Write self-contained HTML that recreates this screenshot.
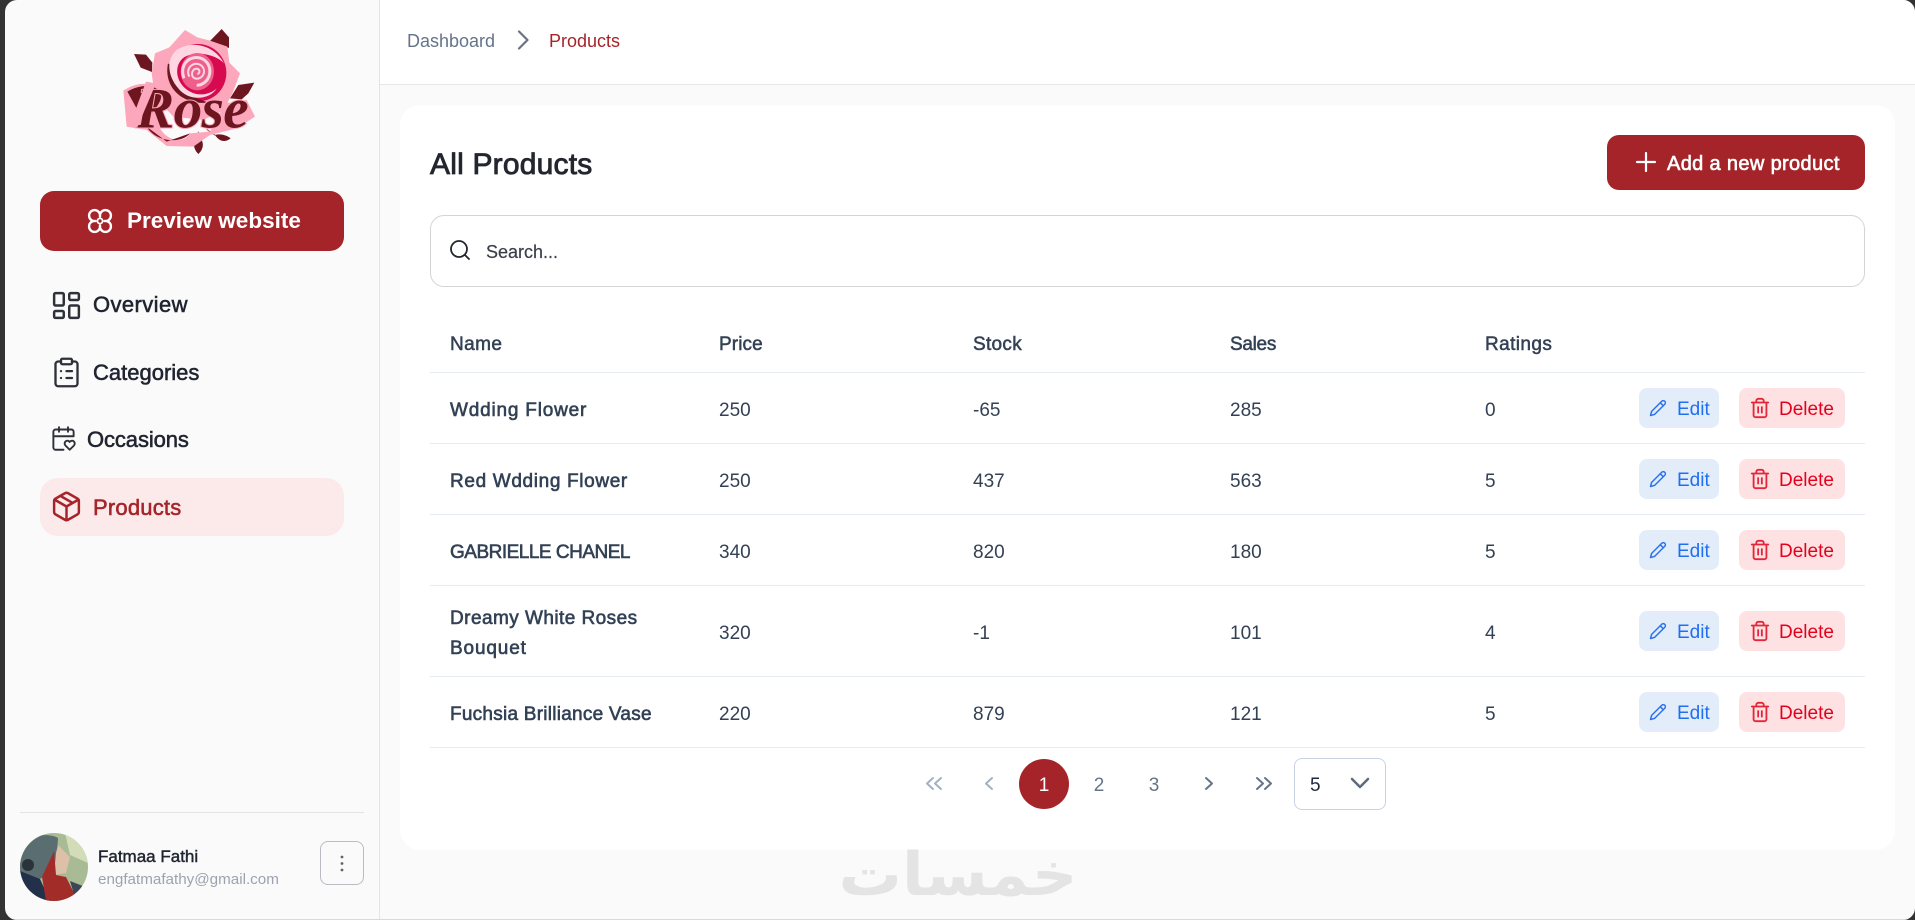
<!DOCTYPE html>
<html><head><meta charset="utf-8"><title>All Products</title>
<style>
html,body{margin:0;padding:0;width:1915px;height:920px;overflow:hidden;background:#333;font-family:"Liberation Sans",Arial,sans-serif}
#page{position:absolute;left:5px;top:0;width:1910px;height:920px;background:#fafafa;border-radius:12px;overflow:hidden}
#root{position:absolute;left:-5px;top:0;width:1915px;height:920px}
.a{position:absolute}
.t{position:absolute;white-space:nowrap;line-height:0}
.sb{position:absolute;left:379px;top:0;width:1px;height:920px;background:#e4e4e7}
.nav{font-size:22px;color:#1f2430;-webkit-text-stroke:.55px #1f2430}
.h{font-size:19px;color:#334155;-webkit-text-stroke:.5px #334155;letter-spacing:.1px}
.n{font-size:19px;color:#334155;-webkit-text-stroke:.6px #334155;left:450px}
.v{font-size:19px;color:#334155}
.line{position:absolute;left:430px;width:1435px;height:1.500px;background:#e7ecf3}
.e{position:absolute;left:1639px;width:80px;height:40px;border-radius:8px;background:#e3edf9}
.d{position:absolute;left:1739px;width:106px;height:40px;border-radius:8px;background:#fee2e3}
.e span,.d span{position:absolute;top:22px;line-height:0;font-size:19px;white-space:nowrap}
.e span{left:38px;color:#1f6ff2}.d span{left:40px;color:#e5001c}
.e svg,.d svg{position:absolute;fill:none;stroke-width:2;stroke-linecap:round;stroke-linejoin:round}
.e svg{left:10px;top:11px;stroke:#2b72ee}.d svg{left:10px;top:9px;stroke:#e5263a}
.pg{font-size:19px;color:#64748b;transform:translateX(-50%)}
svg.i{position:absolute;fill:none;stroke-linecap:round;stroke-linejoin:round}
</style></head><body>
<div id="page"><div id="root">
<!-- header -->
<div class="a" style="left:380px;top:0;width:1535px;height:84px;background:#fff;border-bottom:1px solid #e5e7eb"></div>
<div class="sb"></div>
<div class="t" style="left:407px;top:41px;font-size:18px;color:#64748b">Dashboard</div>
<svg class="i" style="left:514px;top:30px" width="18" height="20" viewBox="0 0 18 20"><path d="M5 1.500 13.500 10 5 18.500" stroke="#6b7280" stroke-width="2.200"/></svg>
<div class="t" style="left:549px;top:41px;font-size:18px;color:#a52429">Products</div>

<!-- logo -->
<svg class="a" style="left:110px;top:20px" width="160" height="140" viewBox="0 0 480 420">
<path d="M298 65 335 27 357 52 357 84Z" fill="#6e1620"/>
<path d="M72 102 108 104 127 128 126 156 92 143Z" fill="#6e1620"/>
<path d="M360 235 385 195 433 188 415 220 395 238Z" fill="#6e1620"/>
<path d="M265 345C248 365 248 385 265 402 283 385 283 365 265 345Z" fill="#6e1620"/>
<path d="M315 345C330 340 350 345 362 355 345 368 328 365 315 345Z" fill="#6e1620"/>
<path d="M265 335V350M290 328 316 346" stroke="#8d6a6d" stroke-width="3"/>
<path d="M225 30 262 52 300 62 352 80 358 128 390 160 368 218 342 270 280 300 190 290 135 230 125 160 135 100 178 82Z" fill="#fca7bb"/>
<ellipse cx="265" cy="158" rx="84" ry="86" fill="#d80a4f" transform="rotate(-10 265 158)"/>
<path d="M174 130C160 200 215 255 295 248 250 232 205 215 200 150Z" fill="#6e1620"/>
<path d="M200 90C240 62 310 70 342 130 320 105 260 90 222 112 190 135 195 190 240 215 270 232 305 220 320 205 300 240 235 245 205 205 170 165 170 115 200 90Z" fill="#ffd6e2"/>
<ellipse cx="262" cy="155" rx="50" ry="56" fill="#ef5f8c"/>
<path d="M222 175C205 130 245 100 280 118 315 140 300 195 260 196" fill="none" stroke="#ffd6e2" stroke-width="9"/>
<path d="M238 170C225 145 250 122 272 135 292 150 280 178 258 176 240 172 244 148 258 146 270 146 272 160 262 162" fill="none" stroke="#ffd6e2" stroke-width="6"/>
<path d="M40 212C85 180 150 185 170 225 180 270 140 290 150 325 175 368 225 368 240 340L300 335 345 250 410 240 435 290 380 325 300 345 250 380 170 378 110 330 50 320Z" fill="#fca7bb"/>
<path d="M52 215C85 195 130 190 150 215 165 240 130 270 105 310 130 370 215 372 240 340L250 300 240 340 170 365 110 320Z" fill="#6e1620"/>
<text x="78" y="322" font-family="Liberation Serif,serif" font-style="italic" font-weight="700" font-size="172" fill="#6e1620" stroke="#fca7bb" stroke-width="6" paint-order="stroke" letter-spacing="-2">Rose</text>
<path d="M108 185 138 190 82 322 58 320Z" fill="#fca7bb"/>
</svg>

<!-- preview -->
<div class="a" style="left:40px;top:191px;width:304px;height:60px;background:#a52429;border-radius:14px"></div>
<svg class="i" style="left:87px;top:208px" width="26" height="26" viewBox="0 0 26 26"><path d="M13 8.500A5.500 5.500 0 1 1 17.500 13 5.500 5.500 0 1 1 13 17.500 5.500 5.500 0 1 1 8.500 13 5.500 5.500 0 1 1 13 8.500Z" stroke="#fff" stroke-width="2.400"/><circle cx="13" cy="13" r="2.600" stroke="#fff" stroke-width="1.800"/></svg>
<div class="t" style="left:127px;top:221px;font-size:22.500px;font-weight:700;color:#fff">Preview website</div>

<!-- nav -->
<svg class="i" style="left:50px;top:288.500px" width="33" height="33" viewBox="0 0 24 24" stroke="#2e313a" stroke-width="1.800"><rect x="3" y="3" width="7" height="9" rx="1"/><rect x="14" y="3" width="7" height="5" rx="1"/><rect x="14" y="12" width="7" height="9" rx="1"/><rect x="3" y="16" width="7" height="5" rx="1"/></svg>
<div class="t nav" style="left:93px;top:305px;letter-spacing:.4px">Overview</div>
<svg class="i" style="left:50px;top:355.500px" width="33" height="33" viewBox="0 0 24 24" stroke="#2e313a" stroke-width="1.700"><rect x="8" y="2" width="8" height="4" rx="1"/><path d="M16 4h2a2 2 0 0 1 2 2v14a2 2 0 0 1-2 2H6a2 2 0 0 1-2-2V6a2 2 0 0 1 2-2h2"/><path d="M12 11h4M12 16h4M8 11h.01M8 16h.01"/></svg>
<div class="t nav" style="left:93px;top:373px">Categories</div>
<svg class="i" style="left:50px;top:425px" width="27" height="27" viewBox="0 0 24 24" stroke="#2e313a" stroke-width="1.700"><path d="M3 10h18V6a2 2 0 0 0-2-2H5a2 2 0 0 0-2 2v14c0 1.100.9 2 2 2h7"/><path d="M8 2v4M16 2v4"/><path d="M21.290 14.700a2.430 2.430 0 0 0-2.650-.52c-.3.120-.57.300-.8.530l-.34.340-.35-.34a2.430 2.430 0 0 0-2.650-.53c-.3.120-.56.300-.79.530-.95.940-1 2.530.2 3.740L17.500 22l3.600-3.550c1.200-1.210 1.140-2.800.19-3.740Z"/></svg>
<div class="t nav" style="left:87px;top:440px;letter-spacing:-.1px">Occasions</div>
<div class="a" style="left:40px;top:478px;width:304px;height:58px;background:#fceaea;border-radius:18px"></div>
<svg class="i" style="left:50px;top:490px" width="33" height="33" viewBox="0 0 24 24" stroke="#a52429" stroke-width="1.800"><path d="M11 21.730a2 2 0 0 0 2 0l7-4A2 2 0 0 0 21 16V8a2 2 0 0 0-1-1.730l-7-4a2 2 0 0 0-2 0l-7 4A2 2 0 0 0 3 8v8a2 2 0 0 0 1 1.730z"/><path d="M12 22V12M3.300 7 12 12l8.700-5M7.500 4.270l9 5.150"/></svg>
<div class="t nav" style="left:93px;top:508px;color:#a52429;-webkit-text-stroke:.55px #a52429;letter-spacing:.2px">Products</div>

<!-- user -->
<div class="a" style="left:20px;top:812px;width:344px;height:1px;background:#e4e4e7"></div>
<svg class="a" style="left:20px;top:833px" width="68" height="68" viewBox="0 0 68 68"><defs><clipPath id="c"><circle cx="34" cy="34" r="34"/></clipPath></defs><g clip-path="url(#c)"><rect width="68" height="68" fill="#a9bb95"/><path d="M45 0H68V30L50 22Z" fill="#d3dcb8"/><path d="M0 18C8 0 30 0 38 5L36 35 20 46 0 40Z" fill="#5a6d70"/><path d="M0 38 20 46 30 68H0Z" fill="#23304a"/><path d="M38 12 50 24 46 40 34 42 36 20Z" fill="#dcc0a8"/><path d="M34 18 36 42 46 44 58 68H26L22 44Z" fill="#a22c28"/><path d="M50 48 68 55V68H56Z" fill="#3d4656"/><circle cx="8" cy="32" r="6" fill="#2a3338"/></g></svg>
<div class="t" style="left:98px;top:857px;font-size:17px;color:#1f2430;-webkit-text-stroke:.45px #1f2430">Fatmaa Fathi</div>
<div class="t" style="left:98px;top:880px;font-size:15.200px;color:#9ca3af">engfatmafathy@gmail.com</div>
<div class="a" style="left:320px;top:841px;width:42px;height:42px;border:1px solid #b9bcc2;border-radius:8px"></div>
<svg class="i" style="left:338px;top:852px" width="8" height="22" viewBox="0 0 8 22"><circle cx="4" cy="5" r="1.400" fill="#5b6470"/><circle cx="4" cy="11.500" r="1.400" fill="#5b6470"/><circle cx="4" cy="18" r="1.400" fill="#5b6470"/></svg>

<!-- card -->
<div class="a" style="left:400px;top:105px;width:1495px;height:745px;background:#fff;border-radius:20px"></div>
<div class="t" style="left:430px;top:164.500px;font-size:30px;color:#23262e;-webkit-text-stroke:.85px #23262e;letter-spacing:.2px">All Products</div>
<div class="a" style="left:1607px;top:135px;width:258px;height:55px;background:#a52429;border-radius:12px"></div>
<svg class="i" style="left:1635px;top:151px" width="22" height="22" viewBox="0 0 22 22"><path d="M11 2V20M2 11H20" stroke="#fff" stroke-width="2.200"/></svg>
<div class="t" style="left:1667px;top:164px;font-size:20px;color:#fff;-webkit-text-stroke:.6px #fff;letter-spacing:.35px">Add a new product</div>

<div class="a" style="left:430px;top:215px;width:1433px;height:70px;border:1px solid #d4d4d8;border-radius:14px"></div>
<svg class="i" style="left:448px;top:238px" width="24" height="24" viewBox="0 0 24 24" stroke="#23262e" stroke-width="1.800"><circle cx="11" cy="11" r="8"/><path d="M21 21l-4.300-4.300"/></svg>
<div class="t" style="left:486px;top:252px;font-size:18px;color:#3a3f4a;-webkit-text-stroke:.2px #3a3f4a">Search...</div>

<!-- table head -->
<div class="t h" style="left:450px;top:345px;letter-spacing:.4px">Name</div>
<div class="t h" style="left:719px;top:345px">Price</div>
<div class="t h" style="left:973px;top:345px;letter-spacing:.3px">Stock</div>
<div class="t h" style="left:1230px;top:345px;letter-spacing:-.3px">Sales</div>
<div class="t h" style="left:1485px;top:345px;letter-spacing:.4px">Ratings</div>
<div class="line" style="top:371.500px"></div>
<div class="line" style="top:442.500px"></div>
<div class="line" style="top:513.500px"></div>
<div class="line" style="top:584.500px"></div>
<div class="line" style="top:675.500px"></div>
<div class="line" style="top:746.500px"></div>

<!-- rows -->
<div class="t n" style="top:411px;letter-spacing:.8px">Wdding Flower</div>
<div class="t v" style="left:719px;top:411px">250</div><div class="t v" style="left:973px;top:411px">-65</div><div class="t v" style="left:1230px;top:411px">285</div><div class="t v" style="left:1485px;top:411px">0</div>
<div class="e" style="top:388px"><svg width="18" height="18" viewBox="0 0 24 24"><path d="M17 3a2.800 2.800 0 1 1 4 4L7.500 20.500 2 22l1.500-5.500Z"/><path d="m15 5 4 4"/></svg><span>Edit</span></div>
<div class="d" style="top:388px"><svg width="22" height="22" viewBox="0 0 24 24"><path d="M3 6h18M19 6v14c0 1-1 2-2 2H7c-1 0-2-1-2-2V6M8 6V4c0-1 1-2 2-2h4c1 0 2 1 2 2v2M10 11v6M14 11v6"/></svg><span>Delete</span></div>

<div class="t n" style="top:482px;letter-spacing:.65px">Red Wdding Flower</div>
<div class="t v" style="left:719px;top:482px">250</div><div class="t v" style="left:973px;top:482px">437</div><div class="t v" style="left:1230px;top:482px">563</div><div class="t v" style="left:1485px;top:482px">5</div>
<div class="e" style="top:459px"><svg width="18" height="18" viewBox="0 0 24 24"><path d="M17 3a2.800 2.800 0 1 1 4 4L7.500 20.500 2 22l1.500-5.500Z"/><path d="m15 5 4 4"/></svg><span>Edit</span></div>
<div class="d" style="top:459px"><svg width="22" height="22" viewBox="0 0 24 24"><path d="M3 6h18M19 6v14c0 1-1 2-2 2H7c-1 0-2-1-2-2V6M8 6V4c0-1 1-2 2-2h4c1 0 2 1 2 2v2M10 11v6M14 11v6"/></svg><span>Delete</span></div>

<div class="t n" style="top:553px;letter-spacing:-.5px">GABRIELLE CHANEL</div>
<div class="t v" style="left:719px;top:553px">340</div><div class="t v" style="left:973px;top:553px">820</div><div class="t v" style="left:1230px;top:553px">180</div><div class="t v" style="left:1485px;top:553px">5</div>
<div class="e" style="top:530px"><svg width="18" height="18" viewBox="0 0 24 24"><path d="M17 3a2.800 2.800 0 1 1 4 4L7.500 20.500 2 22l1.500-5.500Z"/><path d="m15 5 4 4"/></svg><span>Edit</span></div>
<div class="d" style="top:530px"><svg width="22" height="22" viewBox="0 0 24 24"><path d="M3 6h18M19 6v14c0 1-1 2-2 2H7c-1 0-2-1-2-2V6M8 6V4c0-1 1-2 2-2h4c1 0 2 1 2 2v2M10 11v6M14 11v6"/></svg><span>Delete</span></div>

<div class="t n" style="top:619px;letter-spacing:.45px">Dreamy White Roses</div>
<div class="t n" style="top:649px;letter-spacing:.85px">Bouquet</div>
<div class="t v" style="left:719px;top:634px">320</div><div class="t v" style="left:973px;top:634px">-1</div><div class="t v" style="left:1230px;top:634px">101</div><div class="t v" style="left:1485px;top:634px">4</div>
<div class="e" style="top:611px"><svg width="18" height="18" viewBox="0 0 24 24"><path d="M17 3a2.800 2.800 0 1 1 4 4L7.500 20.500 2 22l1.500-5.500Z"/><path d="m15 5 4 4"/></svg><span>Edit</span></div>
<div class="d" style="top:611px"><svg width="22" height="22" viewBox="0 0 24 24"><path d="M3 6h18M19 6v14c0 1-1 2-2 2H7c-1 0-2-1-2-2V6M8 6V4c0-1 1-2 2-2h4c1 0 2 1 2 2v2M10 11v6M14 11v6"/></svg><span>Delete</span></div>

<div class="t n" style="top:715px;letter-spacing:.25px">Fuchsia Brilliance Vase</div>
<div class="t v" style="left:719px;top:715px">220</div><div class="t v" style="left:973px;top:715px">879</div><div class="t v" style="left:1230px;top:715px">121</div><div class="t v" style="left:1485px;top:715px">5</div>
<div class="e" style="top:692px"><svg width="18" height="18" viewBox="0 0 24 24"><path d="M17 3a2.800 2.800 0 1 1 4 4L7.500 20.500 2 22l1.500-5.500Z"/><path d="m15 5 4 4"/></svg><span>Edit</span></div>
<div class="d" style="top:692px"><svg width="22" height="22" viewBox="0 0 24 24"><path d="M3 6h18M19 6v14c0 1-1 2-2 2H7c-1 0-2-1-2-2V6M8 6V4c0-1 1-2 2-2h4c1 0 2 1 2 2v2M10 11v6M14 11v6"/></svg><span>Delete</span></div>

<!-- pagination -->
<svg class="i" style="left:924px;top:774px" width="20" height="20" viewBox="0 0 20 20" stroke="#a3b1c6" stroke-width="2"><path d="M9 4 3 9.500 9 15M17 4 11 9.500 17 15"/></svg>
<svg class="i" style="left:979px;top:774px" width="20" height="20" viewBox="0 0 20 20" stroke="#a3b1c6" stroke-width="2"><path d="M13 4 7 9.500 13 15"/></svg>
<div class="a" style="left:1019px;top:759px;width:50px;height:50px;border-radius:50%;background:#a52429"></div>
<div class="t pg" style="left:1044px;top:786px;color:#fff">1</div>
<div class="t pg" style="left:1099px;top:786px">2</div>
<div class="t pg" style="left:1154px;top:786px">3</div>
<svg class="i" style="left:1199px;top:774px" width="20" height="20" viewBox="0 0 20 20" stroke="#64748b" stroke-width="2"><path d="M7 4 13 9.500 7 15"/></svg>
<svg class="i" style="left:1254px;top:774px" width="20" height="20" viewBox="0 0 20 20" stroke="#64748b" stroke-width="2"><path d="M3 4 9 9.500 3 15M11 4 17 9.500 11 15"/></svg>
<div class="a" style="left:1294px;top:758px;width:90px;height:50px;border:1px solid #c8d4e4;border-radius:8px"></div>
<div class="t" style="left:1310px;top:786px;font-size:19px;color:#1e293b">5</div>
<svg class="i" style="left:1349px;top:775px" width="22" height="18" viewBox="0 0 22 18" stroke="#5f6b7a" stroke-width="2.500"><path d="M3 4 11 12 19 4"/></svg>

<!-- watermark -->
<div class="t" dir="rtl" style="left:808px;top:875px;width:300px;text-align:center;font-family:'DejaVu Sans',sans-serif;font-weight:700;font-size:60px;color:#e4e4e4;transform:scaleX(1.050)">خمسات</div>

<div class="a" style="left:0;top:918.500px;width:1915px;height:1.500px;background:#d9d9d9"></div>
</div></div>
</body></html>
